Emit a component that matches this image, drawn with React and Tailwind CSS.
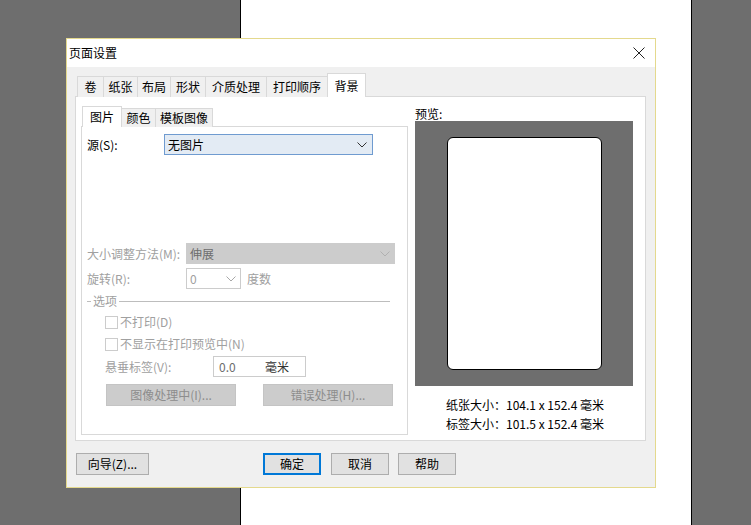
import React from "react";

const font = "font-['Microsoft_YaHei','Noto_Sans_CJK_SC',sans-serif]";

const Chevron = ({ color = "#333" }) => (
  <svg width="10" height="6" viewBox="0 0 10 6">
    <path d="M0.5 0.5 L5 5 L9.5 0.5" fill="none" stroke={color} strokeWidth="1" />
  </svg>
);

const tabs = [
  ["卷", "w-[27px]"],
  ["纸张", "w-[35px]"],
  ["布局", "w-[34px]"],
  ["形状", "w-[36px]"],
  ["介质处理", "w-[62px]"],
  ["打印顺序", "w-[62px]"],
];

const Checkbox = ({ label }) => (
  <div className="flex items-center h-[22px] pl-[18px] text-[#a0a0a0]">
    <span className="w-[13px] h-[13px] border border-[#cccccc] bg-white mr-[2px]" />
    <span>{label}</span>
  </div>
);

const App = () => {
  return (
    <div className={`relative w-[751px] h-[525px] flex bg-[#6e6e6e] text-[12px] text-black ${font}`}>
      <div className="w-[240px]" />
      <div className="w-[452px] bg-white border-x border-black" />

      {/* dialog */}
      <div className="absolute left-[66px] top-[38px] w-[590px] h-[450px] border border-[#e4d98d] bg-[#f0f0f0] flex flex-col">
        <div className="h-[28px] bg-white flex items-center justify-between pl-[2px] pr-[10px]">
          <span>页面设置</span>
          <svg width="12" height="12" viewBox="0 0 12 12">
            <path d="M0.5 0.5 L11.5 11.5 M11.5 0.5 L0.5 11.5" stroke="#222" strokeWidth="1" />
          </svg>
        </div>

        <div className="flex flex-col pl-[8px] pt-[6px]">
          {/* main tabs */}
          <div className="flex items-end h-[24px] pl-[2px] -mb-px relative z-10">
            {tabs.map(([t, w]) => (
              <div key={t} className={`${w} h-[21px] -ml-px first:ml-0 border border-b-0 border-[#d9d9d9] bg-[#f0f0f0] flex items-center justify-center`}>
                {t}
              </div>
            ))}
            <div className="w-[39px] h-[24px] -ml-px border border-b-0 border-[#d9d9d9] bg-white flex items-center justify-center">
              背景
            </div>
          </div>

          {/* tab panel */}
          <div className="w-[571px] h-[345px] border border-[#d9d9d9] bg-white flex pl-[5px] pt-[9px]">
            {/* left column */}
            <div className="w-[327px] flex flex-col">
              <div className="flex items-end h-[21px] pl-[1px] -mb-px relative z-10">
                <div className="w-[40px] h-[21px] border border-b-0 border-[#d9d9d9] bg-white flex items-center justify-center">图片</div>
                <div className="w-[35px] h-[19px] -ml-px border border-b-0 border-[#d9d9d9] bg-[#f0f0f0] flex items-center justify-center">颜色</div>
                <div className="w-[58px] h-[19px] -ml-px border border-b-0 border-[#d9d9d9] bg-[#f0f0f0] flex items-center justify-center">模板图像</div>
              </div>
              <div className="h-[309px] border border-[#d9d9d9] bg-white flex flex-col pl-[5px]">
                <div className="flex items-center mt-[7px] h-[21px]">
                  <span className="w-[77px]">源(S):</span>
                  <div className="w-[209px] h-[21px] border border-[#6f9bd0] bg-[#e3ebf4] flex items-center justify-between pl-[3px] pr-[5px]">
                    <span>无图片</span>
                    <Chevron />
                  </div>
                </div>

                <div className="flex items-center mt-[88px] h-[21px] text-[#a0a0a0]">
                  <span className="w-[99px] whitespace-nowrap">大小调整方法(M):</span>
                  <div className="w-[209px] h-[21px] bg-[#cccccc] flex items-center justify-between pl-[4px] pr-[5px]">
                    <span className="text-[#6d6d6d]">伸展</span>
                    <Chevron color="#b0b0b0" />
                  </div>
                </div>

                <div className="flex items-center mt-[4px] h-[21px] text-[#a0a0a0]">
                  <span className="w-[99px]">旋转(R):</span>
                  <div className="w-[55px] h-[21px] border border-[#cccccc] bg-white flex items-center justify-between pl-[3px] pr-[4px]">
                    <span>0</span>
                    <Chevron color="#a8a8a8" />
                  </div>
                  <span className="ml-[6px]">度数</span>
                </div>

                <div className="flex items-center mt-[3px] h-[18px] pr-[17px] text-[#a0a0a0]">
                  <span className="w-[4px] border-t border-[#bdbdbd]" />
                  <span className="px-[2px]">选项</span>
                  <span className="flex-1 border-t border-[#bdbdbd]" />
                </div>

                <div className="mt-[1px]">
                  <Checkbox label="不打印(D)" />
                </div>
                <Checkbox label="不显示在打印预览中(N)" />

                <div className="flex items-center mt-[1px] h-[21px] pl-[18px] text-[#a0a0a0]">
                  <span className="w-[108px]">悬垂标签(V):</span>
                  <div className="w-[93px] h-[21px] border border-[#cccccc] bg-white flex items-center pl-[5px] text-[#6d6d6d]">
                    <span className="w-[46px]">0.0</span>
                    <span className="text-[#333]">毫米</span>
                  </div>
                </div>

                <div className="flex mt-[7px] pl-[19px] gap-[27px] text-[#8d8d8d]">
                  <div className="w-[130px] h-[22px] bg-[#cccccc] border border-[#c4c4c4] flex items-center justify-center">图像处理中(I)...</div>
                  <div className="w-[130px] h-[22px] bg-[#cccccc] border border-[#c4c4c4] flex items-center justify-center">错误处理(H)...</div>
                </div>
              </div>
            </div>

            {/* right column: preview */}
            <div className="ml-[7px] w-[218px] flex flex-col">
              <div className="h-[15px] leading-[15px]">预览:</div>
              <div className="h-[265px] bg-[#6e6e6e] flex items-center justify-center">
                <div className="w-[155px] h-[233px] bg-white border border-black rounded-[6px]" />
              </div>
              <div className="flex flex-col items-center mt-[9px] leading-[19px] pl-[2px]">
                <span>纸张大小：104.1 x 152.4 毫米</span>
                <span>标签大小：101.5 x 152.4 毫米</span>
              </div>
            </div>
          </div>

          {/* bottom buttons */}
          <div className="flex mt-[12px] pl-[1px]">
            <div className="w-[73px] h-[22px] bg-[#e1e1e1] border border-[#adadad] flex items-center justify-center">向导(Z)...</div>
            <div className="ml-[114px] w-[58px] h-[22px] bg-[#e1e1e1] border-2 border-[#0078d7] flex items-center justify-center">确定</div>
            <div className="ml-[10px] w-[58px] h-[22px] bg-[#e1e1e1] border border-[#adadad] flex items-center justify-center">取消</div>
            <div className="ml-[9px] w-[58px] h-[22px] bg-[#e1e1e1] border border-[#adadad] flex items-center justify-center">帮助</div>
          </div>
        </div>
      </div>
    </div>
  );
};

export default App;
